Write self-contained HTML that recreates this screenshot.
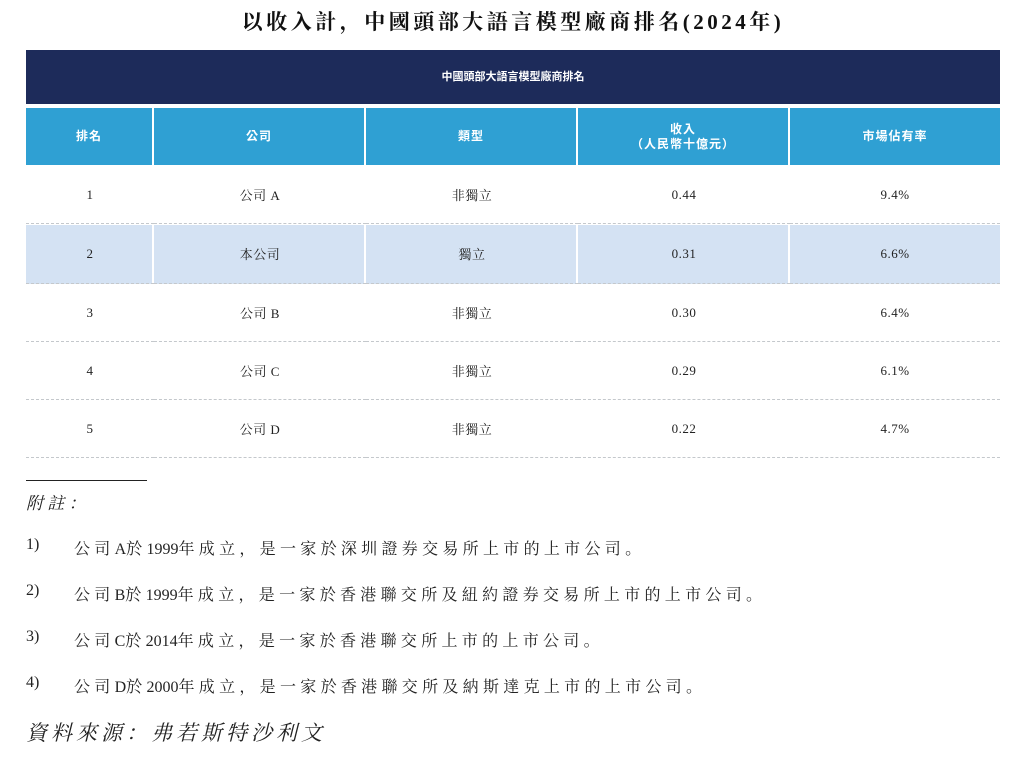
<!DOCTYPE html><html><head><meta charset="utf-8"><style>
body{margin:0;width:1026px;height:759px;background:#fff;position:relative;overflow:hidden;font-family:"Liberation Serif","Noto Serif CJK SC",serif;color:#222}
.a{position:absolute}
.t{left:0;width:1026px;top:6px;text-align:center;font-size:21px;font-weight:bold;letter-spacing:3.5px;color:#111}
.dk{left:26px;top:50px;width:974px;height:54px;background:#1d2b5a;color:#fff;font:bold 11px "Liberation Sans","Noto Sans CJK TC",sans-serif;text-align:center;line-height:54px}
.h{top:108px;height:57px;background:#2fa0d3;color:#fff;font:bold 12px "Liberation Sans","Noto Sans CJK TC",sans-serif;display:flex;align-items:center;justify-content:center;text-align:center;line-height:15px;letter-spacing:1px}
.c{height:58px;display:flex;align-items:center;justify-content:center;font-size:13px;border-bottom:1px dashed #c4c8cc;box-sizing:border-box;letter-spacing:0.5px}
.hl{background:#d4e2f3}
.n{font-size:16px;left:26px;letter-spacing:4.3px}
.n b{font-weight:normal;letter-spacing:0}
</style></head><body>
<div class="a t">以收入計，中國頭部大語言模型廠商排名(2024年)</div>
<div class="a dk">中國頭部大語言模型廠商排名</div>
<div class="a h" style="left:26px;width:126px">排名</div>
<div class="a h" style="left:154px;width:210px">公司</div>
<div class="a h" style="left:366px;width:210px">類型</div>
<div class="a h" style="left:578px;width:210px">收入<br>（人民幣十億元）</div>
<div class="a h" style="left:790px;width:210px">市場佔有率</div>
<div class="a hl" style="left:26px;top:225px;width:974px;height:59px"></div>
<div class="a" style="left:152px;top:225px;width:2px;height:59px;background:#fff"></div>
<div class="a" style="left:364px;top:225px;width:2px;height:59px;background:#fff"></div>
<div class="a" style="left:576px;top:225px;width:2px;height:59px;background:#fff"></div>
<div class="a" style="left:788px;top:225px;width:2px;height:59px;background:#fff"></div>
<div class="a" style="left:26px;top:166px;width:974px">
<div style="display:flex"><div class="c" style="width:128px">1</div><div class="c" style="width:212px">公司 A</div><div class="c" style="width:212px">非獨立</div><div class="c" style="width:212px">0.44</div><div class="c" style="width:210px">9.4%</div></div>
<div style="display:flex"><div class="c" style="width:128px;height:60px">2</div><div class="c" style="width:212px;height:60px">本公司</div><div class="c" style="width:212px;height:60px">獨立</div><div class="c" style="width:212px;height:60px">0.31</div><div class="c" style="width:210px;height:60px">6.6%</div></div>
<div style="display:flex"><div class="c" style="width:128px">3</div><div class="c" style="width:212px">公司 B</div><div class="c" style="width:212px">非獨立</div><div class="c" style="width:212px">0.30</div><div class="c" style="width:210px">6.4%</div></div>
<div style="display:flex"><div class="c" style="width:128px">4</div><div class="c" style="width:212px">公司 C</div><div class="c" style="width:212px">非獨立</div><div class="c" style="width:212px">0.29</div><div class="c" style="width:210px">6.1%</div></div>
<div style="display:flex"><div class="c" style="width:128px">5</div><div class="c" style="width:212px">公司 D</div><div class="c" style="width:212px">非獨立</div><div class="c" style="width:212px">0.22</div><div class="c" style="width:210px">4.7%</div></div>
</div>
<div class="a" style="left:26px;top:480px;width:121px;height:1px;background:#222"></div>
<div class="a n" style="top:489px;font-style:italic;font-size:17px">附註：</div>
<div class="a n" style="top:536px"><b>1)</b></div><div class="a n" style="left:74px;top:536px">公司<b>A</b>於<b>1999</b>年成立，是一家於深圳證券交易所上市的上市公司。</div>
<div class="a n" style="top:582px"><b>2)</b></div><div class="a n" style="left:74px;top:582px">公司<b>B</b>於<b>1999</b>年成立，是一家於香港聯交所及紐約證券交易所上市的上市公司。</div>
<div class="a n" style="top:628px"><b>3)</b></div><div class="a n" style="left:74px;top:628px">公司<b>C</b>於<b>2014</b>年成立，是一家於香港聯交所上市的上市公司。</div>
<div class="a n" style="top:674px"><b>4)</b></div><div class="a n" style="left:74px;top:674px">公司<b>D</b>於<b>2000</b>年成立，是一家於香港聯交所及納斯達克上市的上市公司。</div>
<div class="a n" style="top:717px;font-style:italic;font-size:21px;letter-spacing:4px">資料來源：弗若斯特沙利文</div>
</body></html>
